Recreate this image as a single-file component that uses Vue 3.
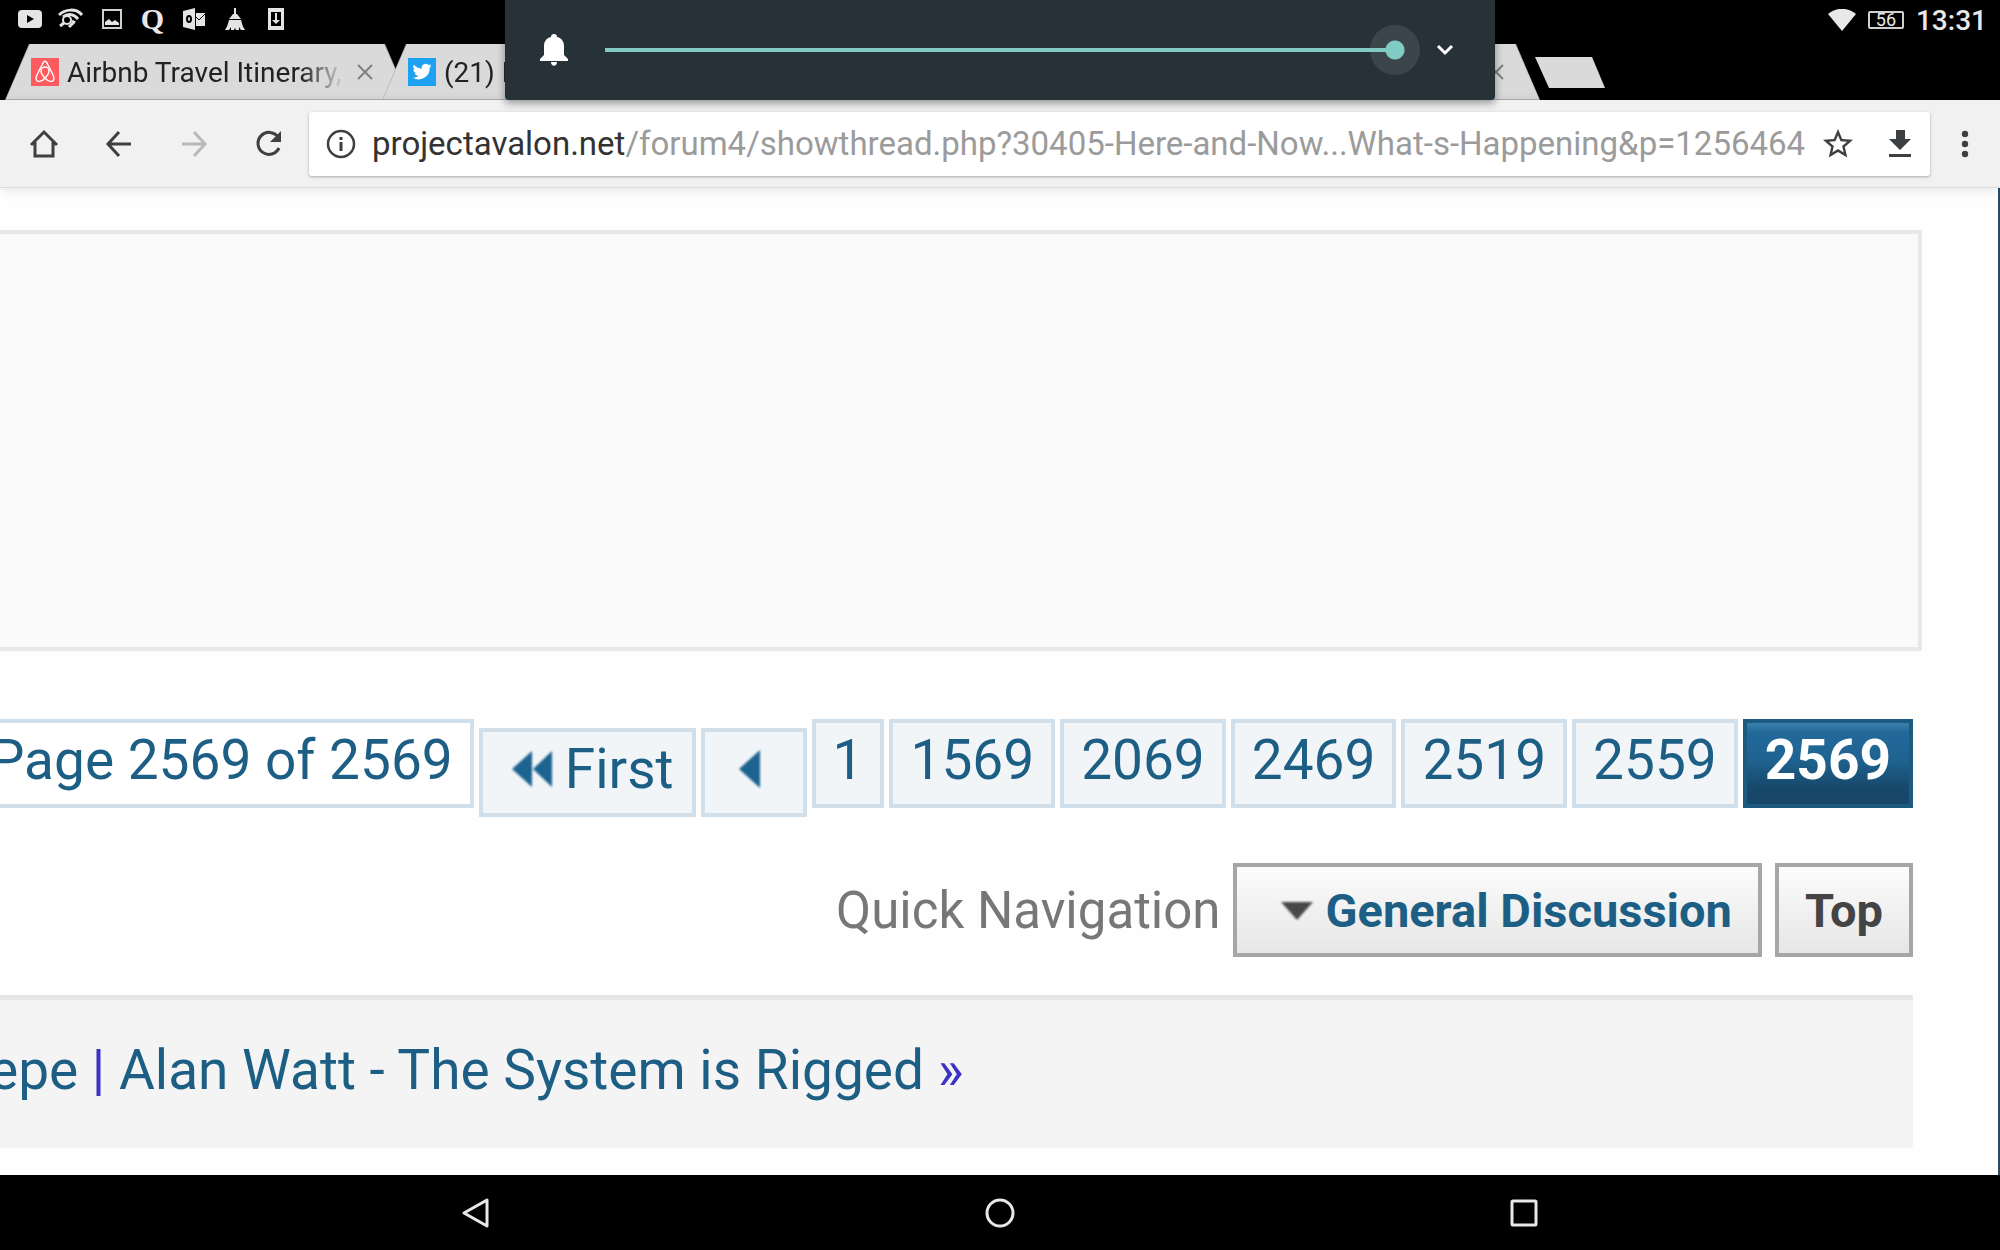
<script setup>
import { ref } from 'vue'

const volume = ref(100)

const tabs = [
  { id: 1, icon: 'airbnb', title: 'Airbnb Travel Itinerary,' },
  { id: 2, icon: 'twitter', title: '(21) N' },
  { id: 3, icon: '', title: '' },
  { id: 4, icon: '', title: '' },
]

const pages = ['1', '1569', '2069', '2469', '2519', '2559']
</script>

<template>
  <div class="screen">
    <header class="top">
      <div class="status">
        <div class="status-left">
          <span class="status-icon">
            <svg width="26" height="20" viewBox="0 0 26 20">
              <rect x="1" y="1" width="24" height="18" rx="4" fill="#e4e4e4" />
              <path d="M10 6l7 4-7 4z" fill="#000" />
            </svg>
          </span>
          <span class="status-icon">
            <svg width="26" height="22" viewBox="0 0 26 22" fill="none" stroke="#e4e4e4">
              <path d="M1 7C7 1 18 0 24 7" stroke-width="3" />
              <path d="M5 9c5-4 11-3 15 2M14 13l3 2" stroke-width="3" />
              <circle cx="9" cy="12" r="4" fill="#000" stroke-width="2" />
              <path d="M6 15l-4 3M11 19l4-4" stroke-width="3" />
            </svg>
          </span>
          <span class="status-icon">
            <svg width="20" height="20" viewBox="0 0 20 20">
              <rect x="1" y="1" width="18" height="18" fill="none" stroke="#d0d0d0" stroke-width="2" />
              <path d="M3 16v-3l4-3 3 3 3-2 4 3v2z" fill="#e4e4e4" />
            </svg>
          </span>
          <span class="status-icon status-q">Q</span>
          <span class="status-icon">
            <svg width="24" height="22" viewBox="0 0 24 22">
              <path d="M1 3l12-3v22L1 19z" fill="#e4e4e4" />
              <path d="M14 5h9v13h-9z" fill="#e4e4e4" />
              <path d="M14 9l3 3 6-6" fill="none" stroke="#000" />
              <ellipse cx="7" cy="11" rx="2" ry="3" fill="none" stroke="#000" stroke-width="2" />
            </svg>
          </span>
          <span class="status-icon">
            <svg width="20" height="22" viewBox="0 0 20 22" fill="#e4e4e4">
              <path d="M9 0h2v6h-2zM8 6h4l4 5H4zM4 12h12c1 4 2 7 4 10h-4l-2-3v3h-3l-1-2-1 2H6v-3l-2 3H0c2-3 3-6 4-10z" />
            </svg>
          </span>
          <span class="status-icon">
            <svg width="18" height="22" viewBox="0 0 18 22">
              <path d="M1 0h16v22H1zM4 4v14h10V4z" fill="#e4e4e4" fill-rule="evenodd" />
              <path d="M8 5h2v7h3l-4 4-4-4h3z" fill="#e4e4e4" />
            </svg>
          </span>
        </div>
        <div class="status-right">
          <svg width="28" height="22" viewBox="0 0 28 22">
            <path d="M14 22L0 5C8-2 20-2 28 5z" fill="#e8e8e8" />
          </svg>
          <span class="battery">56</span>
          <span class="clock">13:31</span>
        </div>
      </div>

      <nav class="tabs">
        <div v-for="tab in tabs" :key="tab.id" class="tab">
          <svg v-if="tab.icon === 'airbnb'" class="favicon" viewBox="0 0 28 28">
            <rect width="28" height="28" fill="#ff5a5f" />
            <path
              d="M14 20c-3-3-4-5-4-7a4 4 0 0 1 8 0c0 2-1 4-4 7zm0 0c-3 4-9 5-9 0 0-2 4-9 6-13 2-5 4-5 6 0 2 4 6 11 6 13 0 5-6 4-9 0z"
              fill="none"
              stroke="#fff"
              stroke-width="1.4"
            />
          </svg>
          <svg v-if="tab.icon === 'twitter'" class="favicon" viewBox="0 0 28 28">
            <rect width="28" height="28" fill="#1da1f2" />
            <path
              transform="translate(4.5 4) scale(.8)"
              d="M23.9 4.6a10 10 0 0 1-2.8.8 4.9 4.9 0 0 0 2.1-2.7 10 10 0 0 1-3.1 1.2 4.9 4.9 0 0 0-8.4 4.5A14 14 0 0 1 1.7 3.2a4.9 4.9 0 0 0 1.5 6.5 4.9 4.9 0 0 1-2.2-.6v.1a4.9 4.9 0 0 0 3.9 4.8 5 5 0 0 1-2.2.1 4.9 4.9 0 0 0 4.6 3.4A10 10 0 0 1 0 19.5a14 14 0 0 0 21.5-12.4 10 10 0 0 0 2.4-2.5z"
              fill="#fff"
            />
          </svg>
          <span class="tab-title">{{ tab.title }}</span>
          <button class="tab-close" aria-label="Close tab">
            <svg width="16" height="16" viewBox="0 0 16 16">
              <path d="M1 1l14 14M15 1L1 15" stroke="#808080" stroke-width="2" />
            </svg>
          </button>
        </div>
        <button class="new-tab" aria-label="New tab"></button>
      </nav>

      <div class="volume">
        <svg width="28" height="34" viewBox="0 0 28 34" fill="#fff">
          <path d="M14 1c2 0 3 1 3 3 5 1 7 5 7 9v9l4 4v2H0v-2l4-4v-9c0-4 2-8 7-9 0-2 1-3 3-3zM11 29h6c0 5-6 5-6 0z" />
        </svg>
        <input v-model="volume" type="range" min="0" max="100" aria-label="Volume" />
        <button class="expand" aria-label="Expand">
          <svg width="18" height="12" viewBox="0 0 18 12">
            <path d="M2 2l7 7 7-7" fill="none" stroke="#fff" stroke-width="3" />
          </svg>
        </button>
      </div>
    </header>

    <div class="toolbar">
      <button aria-label="Home">
        <svg width="32" height="32" viewBox="0 0 32 32" fill="none" stroke="#3c4043" stroke-width="3">
          <path d="M3 17L16 4l13 13M7 14v14h18V14" />
        </svg>
      </button>
      <button aria-label="Back">
        <svg width="32" height="32" viewBox="0 0 32 32" fill="none" stroke="#3c4043" stroke-width="3">
          <path d="M28 16H5M16 4L5 16l11 12" />
        </svg>
      </button>
      <button aria-label="Forward" disabled>
        <svg width="32" height="32" viewBox="0 0 32 32" fill="none" stroke="#b9b9b9" stroke-width="3">
          <path d="M4 16h23M16 4l11 12-11 12" />
        </svg>
      </button>
      <button aria-label="Reload">
        <svg width="32" height="32" viewBox="0 0 32 32">
          <path d="M26 20a11 11 0 1 1-1-11" fill="none" stroke="#3c4043" stroke-width="3" />
          <path d="M28 3v11H17z" fill="#3c4043" />
        </svg>
      </button>
      <div class="address">
        <svg width="30" height="30" viewBox="0 0 30 30">
          <circle cx="15" cy="15" r="13" fill="none" stroke="#3c4043" stroke-width="2.5" />
          <path d="M13.5 8h3v3h-3zM13.5 13h3v9h-3z" fill="#3c4043" />
        </svg>
        <a class="url" href="#"><b>projectavalon.net</b>/forum4/showthread.php?30405-Here-and-Now...What-s-Happening&amp;p=1256464</a>
        <button aria-label="Bookmark">
          <svg width="36" height="36" viewBox="0 0 24 24" fill="#3c4043">
            <path d="M22 9.24l-7.19-.62L12 2 9.19 8.63 2 9.24l5.46 4.73L5.82 21 12 17.27 18.18 21l-1.63-7.03zM12 15.4l-3.76 2.27 1-4.28-3.32-2.88 4.38-.38L12 6.1l1.71 4.04 4.38.38-3.32 2.88 1 4.28z" />
          </svg>
        </button>
        <button aria-label="Download">
          <svg width="32" height="32" viewBox="0 0 32 32" fill="#3c4043">
            <path d="M12 2h9v9h6L16 22 5 11h7zM5 26h22v3H5z" />
          </svg>
        </button>
      </div>
      <button class="menu" aria-label="Menu">
        <svg width="8" height="28" viewBox="0 0 8 28" fill="#3c4043">
          <circle cx="4" cy="4" r="3.2" />
          <circle cx="4" cy="14" r="3.2" />
          <circle cx="4" cy="24" r="3.2" />
        </svg>
      </button>
    </div>

    <main class="page">
      <section class="panel"></section>

      <nav class="pagination">
        <span class="cell plain">Page 2569 of 2569</span>
        <a class="cell low" href="#">
          <svg class="soft" width="44" height="40" viewBox="0 0 44 40">
            <path d="M21 2v36L1 20zM41 2v36L22 20z" fill="#1c6390" />
          </svg>
          First
        </a>
        <a class="cell low prev" href="#" aria-label="Previous page">
          <svg class="soft" width="24" height="40" viewBox="0 0 24 40">
            <path d="M22 1v38L1 20z" fill="#1c6390" />
          </svg>
        </a>
        <a v-for="page in pages" :key="page" class="cell" href="#">{{ page }}</a>
        <span class="cell current">2569</span>
      </nav>

      <div class="quick">
        <span class="quick-label">Quick Navigation</span>
        <a class="quick-button forum" href="#">
          <svg class="soft" width="36" height="22" viewBox="0 0 36 22">
            <path d="M2 3h32L18 21z" fill="#484848" />
          </svg>
          General Discussion
        </a>
        <a class="quick-button" href="#">Top</a>
      </div>

      <div class="threads">
        <a href="#">epe</a> | <a href="#">Alan Watt - The System is Rigged</a> »
      </div>
    </main>

    <footer class="system">
      <button aria-label="Back">
        <svg width="32" height="32" viewBox="0 0 32 32" fill="none" stroke="#e8e8e8" stroke-width="3" stroke-linejoin="round">
          <path d="M27 3v26L4 16z" />
        </svg>
      </button>
      <button aria-label="Home">
        <svg width="32" height="32" viewBox="0 0 32 32" fill="none" stroke="#e8e8e8" stroke-width="3">
          <circle cx="16" cy="16" r="13" />
        </svg>
      </button>
      <button aria-label="Recent apps">
        <svg width="32" height="32" viewBox="0 0 32 32" fill="none" stroke="#e8e8e8" stroke-width="3">
          <rect x="4" y="4" width="24" height="24" rx="1" />
        </svg>
      </button>
    </footer>
  </div>
</template>

<style>
body {
  margin: 0;
  background: #000;
}
</style>

<style scoped>
.screen {
  display: flex;
  flex-direction: column;
  min-height: 100vh;
  overflow: hidden;
  font-family: Roboto, "Liberation Sans", sans-serif;
  background: #fff;
}

button {
  display: flex;
  align-items: center;
  justify-content: center;
  padding: 0;
  border: none;
  background: transparent;
  cursor: pointer;
}

svg {
  display: block;
  flex: none;
}

a {
  color: #1d5e85;
  text-decoration: none;
}

.top {
  position: relative;
  background: #000;
}

.status {
  display: flex;
  justify-content: space-between;
  height: 44px;
  padding: 0 13px 0 9px;
  box-sizing: border-box;
  color: #e8e8e8;
}

.status-left {
  display: flex;
  align-items: center;
  height: 38px;
}

.status-icon {
  display: flex;
  justify-content: center;
  width: 41px;
}

.status-q {
  font: bold 30px/30px "Liberation Serif", serif;
}

.status-right {
  display: flex;
  align-items: center;
  gap: 12px;
  height: 40px;
}

.battery {
  width: 32px;
  border: 2px solid #d0d0d0;
  border-radius: 2px;
  font-size: 18px;
  line-height: 14px;
  text-align: center;
}

.clock {
  font-size: 28px;
  font-weight: 500;
}

.tabs {
  display: flex;
  height: 56px;
  padding-left: 5px;
}

.tab {
  position: relative;
  display: flex;
  align-items: center;
  flex: none;
  width: 404px;
  height: 56px;
  padding: 0 36px 0 26px;
  box-sizing: border-box;
  background: #b0b0b0;
  clip-path: polygon(24px 0, calc(100% - 24px) 0, 100% 100%, 0 100%);
}

.tab + .tab {
  margin-left: -27px;
}

.tab::before {
  content: '';
  position: absolute;
  inset: 0 1px 1px;
  background: #dadada;
  clip-path: polygon(24px 0, calc(100% - 24px) 0, 100% 100%, 0 100%);
}

.favicon,
.tab-title,
.tab-close {
  position: relative;
}

.favicon {
  width: 28px;
  height: 28px;
}

.tab-title {
  flex: 1;
  margin: 0 12px 0 8px;
  overflow: hidden;
  color: #222;
  font-size: 28px;
  white-space: nowrap;
  mask-image: linear-gradient(90deg, #000 84%, transparent);
}

.new-tab {
  width: 70px;
  height: 31px;
  margin: 13px 0 0 -5px;
  background: #dadada;
  clip-path: polygon(0 0, 57px 0, 100% 100%, 14px 100%);
}

.volume {
  position: absolute;
  z-index: 2;
  top: 0;
  left: 25%;
  width: 50%;
  height: 100px;
  margin-left: 5px;
  max-width: calc(50% - 10px);
  display: flex;
  align-items: center;
  padding: 0 41px 0 35px;
  box-sizing: border-box;
  border-radius: 0 0 4px 4px;
  background: #263238;
  box-shadow: 0 3px 8px rgba(0, 0, 0, 0.4);
}

.volume input {
  flex: 1;
  height: 50px;
  margin: 0 16px 0 37px;
  appearance: none;
  background: linear-gradient(#80cbc4, #80cbc4) 0 50% / calc(100% - 25px) 4px no-repeat;
}

.volume input::-webkit-slider-thumb {
  appearance: none;
  width: 50px;
  height: 50px;
  border-radius: 50%;
  background:
    linear-gradient(#80cbc4, #80cbc4) 0 50% / 25px 4px no-repeat,
    radial-gradient(circle, #80cbc4 9px, #3b464c 10px);
}

.toolbar {
  position: relative;
  z-index: 1;
  display: flex;
  align-items: center;
  height: 88px;
  padding-left: 6px;
  box-sizing: border-box;
  border-bottom: 1px solid #dcdcdc;
  background: #f1f1f1;
  box-shadow: 0 2px 12px rgba(0, 0, 0, 0.1);
}

.toolbar > button {
  width: 75px;
  height: 64px;
}

.toolbar > .menu {
  width: 70px;
}

.address {
  display: flex;
  align-items: center;
  flex: 1;
  min-width: 0;
  height: 64px;
  margin-left: 3px;
  padding: 0 14px 0 17px;
  box-sizing: border-box;
  border-radius: 3px;
  background: #fff;
  box-shadow: 0 1px 3px rgba(0, 0, 0, 0.3);
}

.url {
  flex: 1;
  min-width: 0;
  margin: 0 12px 0 16px;
  overflow: hidden;
  color: #9b9b9b;
  font-size: 33px;
  white-space: nowrap;
}

.url b {
  color: #333;
  font-weight: 400;
}

.address button + button {
  margin-left: 28px;
}

.page {
  flex: 1;
  overflow: hidden;
  border-right: 2px solid #2c4a63;
  background: #fefefe;
}

.panel {
  height: 421px;
  margin: 42px 76px 0 0;
  box-sizing: border-box;
  border: 4px solid #e8e8e8;
  border-left: none;
  background: #fafafa;
}

.pagination {
  display: flex;
  align-items: flex-start;
  justify-content: flex-end;
  gap: 5px;
  margin: 68px 85px 0 0;
}

.cell {
  flex: none;
  height: 89px;
  padding: 0 17px;
  box-sizing: border-box;
  border: 4px solid #d0dfea;
  background: #f1f5f8;
  color: #1d5e85;
  font-size: 55px;
  line-height: 74px;
  white-space: nowrap;
}

.plain {
  background: #fff;
}

.low {
  display: flex;
  align-items: center;
  gap: 10px;
  margin-top: 9px;
  padding: 0 18px 7px 28px;
}

.prev {
  padding: 0 41px 7px 33px;
}

.soft {
  filter: blur(1px);
}

.current {
  padding: 0 18px;
  border-color: #1c5a80;
  background: linear-gradient(#3a80ac, #22699a 12%, #1f6391 45%, #17486a 80%);
  color: #fff;
  font-weight: 700;
}

.quick {
  display: flex;
  align-items: center;
  justify-content: flex-end;
  gap: 13px;
  margin: 46px 85px 0 0;
}

.quick-label {
  color: #777;
  font-size: 51px;
  white-space: nowrap;
}

.quick-button {
  display: flex;
  align-items: center;
  gap: 10px;
  height: 94px;
  padding: 0 26px;
  box-sizing: border-box;
  border: 4px solid #a6a6a6;
  background: linear-gradient(#fcfcfc, #e6e6e6);
  color: #444;
  font-size: 47px;
  font-weight: 700;
  white-space: nowrap;
}

.forum {
  padding-left: 42px;
  color: #1d5e85;
}

.threads {
  height: 153px;
  margin: 38px 85px 27px 0;
  box-sizing: border-box;
  border-top: 5px solid #e6e6e6;
  background: #f4f4f4;
  color: #3a33c4;
  font-size: 55px;
  line-height: 140px;
  text-indent: -11px;
  white-space: nowrap;
}

.system {
  display: flex;
  justify-content: center;
  gap: 492px;
  height: 75px;
  background: #000;
}
</style>
